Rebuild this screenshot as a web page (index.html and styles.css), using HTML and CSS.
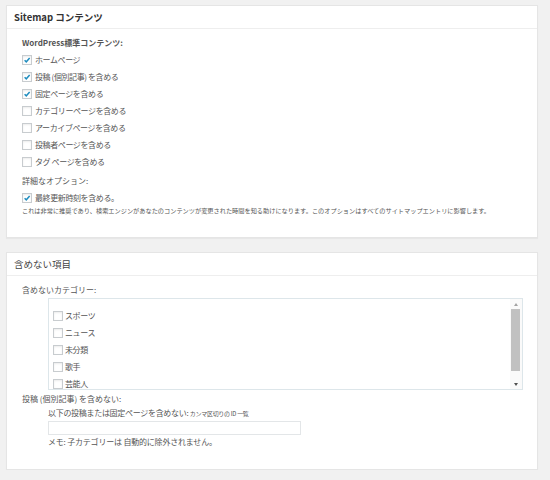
FILE: index.html
```html
<!DOCTYPE html>
<html lang="ja">
<head>
<meta charset="utf-8">
<link rel="stylesheet" href="styles.css">
</head>
<body>
<div class="page">
  <section class="postbox">
    <h3 class="hd">Sitemap コンテンツ</h3>
    <div class="inside">
      <div class="label bold">WordPress標準コンテンツ:</div>
      <div class="row"><span class="cb on"><svg viewBox="0 0 10 10"><path d="M2 5.2 L4.1 7.3 L8.3 2.6" /></svg></span>ホームページ</div>
      <div class="row"><span class="cb on"><svg viewBox="0 0 10 10"><path d="M2 5.2 L4.1 7.3 L8.3 2.6" /></svg></span>投稿 (個別記事) を含める</div>
      <div class="row"><span class="cb on"><svg viewBox="0 0 10 10"><path d="M2 5.2 L4.1 7.3 L8.3 2.6" /></svg></span>固定ページを含める</div>
      <div class="row"><span class="cb"></span>カテゴリーページを含める</div>
      <div class="row"><span class="cb"></span>アーカイブページを含める</div>
      <div class="row"><span class="cb"></span>投稿者ページを含める</div>
      <div class="row"><span class="cb"></span>タグ ページを含める</div>
      <div class="label opt">詳細なオプション:</div>
      <div class="row"><span class="cb on"><svg viewBox="0 0 10 10"><path d="M2 5.2 L4.1 7.3 L8.3 2.6" /></svg></span>最終更新時刻を含める。</div>
      <div class="small">これは非常に推奨であり、検索エンジンがあなたのコンテンツが変更された時間を知る助けになります。このオプションはすべてのサイトマップエントリに影響します。</div>
    </div>
  </section>

  <section class="postbox second">
    <h3 class="hd light">含めない項目</h3>
    <div class="inside">
      <div class="label">含めないカテゴリー:</div>
      <div class="listbox">
        <div class="list">
          <div class="row"><span class="cb"></span>スポーツ</div>
          <div class="row"><span class="cb"></span>ニュース</div>
          <div class="row"><span class="cb"></span>未分類</div>
          <div class="row"><span class="cb"></span>歌手</div>
          <div class="row"><span class="cb"></span>芸能人</div>
        </div>
        <div class="sbar">
          <span class="arr up"></span>
          <span class="thumb"></span>
          <span class="arr down"></span>
        </div>
      </div>
      <div class="label">投稿 (個別記事) を含めない:</div>
      <div class="indent">
        <div class="sub">以下の投稿または固定ページを含めない: <span class="tiny">カンマ区切りの ID 一覧</span></div>
        <div class="input"></div>
        <div class="note">メモ: 子カテゴリーは 自動的に除外されません。</div>
      </div>
    </div>
  </section>
</div>
</body>
</html>
```

FILE: styles.css
```css
html, body {
  margin: 0;
  padding: 0;
  background: #f1f1f1;
}
body {
  font-family: "Noto Sans CJK JP", "Noto Sans", sans-serif;
  color: #555;
  font-size: 8px;
}
.page {
  width: 532px;
  padding: 5px 0 0 6px;
}
.postbox {
  background: #fff;
  border: 1px solid #e5e5e5;
  box-shadow: 0 1px 1px rgba(0,0,0,0.04);
  height: 233px;
  box-sizing: border-box;
}
.postbox.second {
  margin-top: 14px;
  height: 218px;
}
.hd {
  margin: 0;
  height: 23px;
  box-sizing: border-box;
  border-bottom: 1px solid #eee;
  padding: 0 0 0 7px;
  line-height: 22px;
  font-size: 9.5px;
  font-weight: 600;
  color: #333;
}
.hd.light {
  font-weight: 400;
  color: #444;
}
.inside {
  padding: 5px 0 0 15px;
}
.label {
  height: 17px;
  line-height: 17px;
  color: #555;
}
.bold {
  font-weight: 600;
  color: #555;
}
.opt {
  margin-top: 2px;
}
.row {
  height: 17px;
  line-height: 17px;
  display: flex;
  align-items: center;
  white-space: nowrap;
  letter-spacing: -0.4px;
}
.cb {
  width: 10px;
  height: 10px;
  box-sizing: border-box;
  border: 1px solid #c8cccf;
  background: #fff;
  box-shadow: inset 0 1px 2px rgba(0,0,0,0.08);
  margin-right: 3px;
  display: inline-block;
  flex: none;
}
.list .cb {
  margin-right: 2px;
}
.cb svg {
  display: block;
  width: 8px;
  height: 8px;
  fill: none;
  stroke: #1e8cbe;
  stroke-width: 1.8;
}
.small {
  font-size: 6.2px;
  line-height: 9px;
  height: 9px;
  white-space: nowrap;
  color: #555;
}
.listbox {
  margin-left: 26px;
  width: 475px;
  height: 92px;
  box-sizing: border-box;
  border: 1px solid #dde6ea;
  display: flex;
  overflow: hidden;
}
.list {
  flex: 1;
  padding: 8px 0 0 4px;
}
.sbar {
  width: 11px;
  display: flex;
  flex-direction: column;
  align-items: center;
  background: #fafafa;
  padding: 0 1px 0 0;
}
.arr {
  width: 0;
  height: 0;
  border-left: 2.5px solid transparent;
  border-right: 2.5px solid transparent;
}
.arr.up {
  margin-top: 4px;
  border-bottom: 3px solid #a3a3a3;
}
.arr.down {
  margin-top: auto;
  margin-bottom: 3px;
  border-top: 3px solid #505050;
}
.thumb {
  margin-top: 3px;
  width: 9px;
  height: 62px;
  background: #c1c1c1;
}
.indent {
  margin-left: 26px;
}
.sub {
  height: 11px;
  line-height: 11px;
  white-space: nowrap;
  letter-spacing: -0.3px;
}
.tiny {
  font-size: 6px;
}
.input {
  margin-top: 3px;
  width: 253px;
  height: 14px;
  box-sizing: border-box;
  border: 1px solid #e3e6e8;
  background: #fff;
}
.note {
  height: 12px;
  line-height: 12px;
  margin-top: 1px;
  white-space: nowrap;
  letter-spacing: -0.2px;
}
```
